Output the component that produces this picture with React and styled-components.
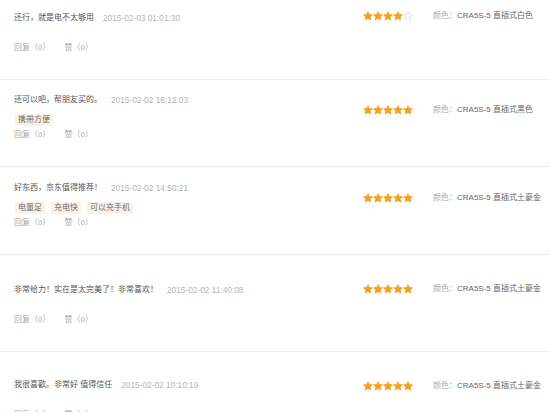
import React from 'react';
import styled, { createGlobalStyle } from 'styled-components';

const GlobalStyle = createGlobalStyle`
    html, body {
        margin: 0;
        padding: 0;
        background: #fff;
    }

    body {
        font-family: "Liberation Sans", "Noto Sans CJK SC", sans-serif;
        font-size: 8px;
        color: #666;
    }
`;

const List = styled.div`
    width: 550px;
`;

const Item = styled.div`
    display: grid;
    grid-template-columns: 349px 1fr;
    padding-left: 14px;
    border-bottom: 1px solid #ececec;
`;

const Main = styled.div`
    padding-top: ${(p) => p.$top + 1}px;
    padding-bottom: 23px;
`;

const Line = styled.div`
    display: flex;
    align-items: center;
    height: 16px;
    line-height: 16px;
    white-space: nowrap;
`;

const Content = styled.span`
    color: #555;
`;

const Time = styled.span`
    margin-left: 9px;
    font-size: 8.3px;
    color: #b4b4b4;
`;

const Tags = styled.div`
    display: flex;
    gap: 6px;
    min-height: 14px;
    box-sizing: border-box;
    padding: ${(p) => (p.$empty ? '0' : '6px 0 1px 1px')};
`;

const Tag = styled.span`
    display: inline-block;
    height: 12px;
    line-height: 12px;
    padding: 0 3px;
    background: #fcf1e6;
    color: #6a6a6a;
`;

const Actions = styled(Line)`
    gap: 14px;
    color: #aaa;
`;

const Side = styled.div`
    padding-top: ${(p) => p.$top}px;
`;

const Meta = styled(Line)`
    gap: 20px;
`;

const Stars = styled.span`
    display: flex;
    width: 50px;
`;

const Spec = styled.span`
    color: #666;

    em {
        font-style: normal;
        color: #aaa;
    }
`;

const Star = ({ on }) => (
    <svg width="10" height="10" viewBox="0 0 24 24">
        <path
            d="M12 1.5l3.2 6.9 7.5.8-5.6 5.1 1.6 7.4L12 17.9l-6.7 3.8 1.6-7.4-5.6-5.1 7.5-.8z"
            fill={on ? '#f7a11a' : '#fff'}
            stroke={on ? '#f0960c' : '#d6d6d6'}
            strokeWidth="1.5"
        />
    </svg>
);

const reviews = [
    { top: 9, side: 8, text: '还行，就是电不太够用', time: '2015-02-03 01:01:30', tags: [], score: 4, color: '直插式白色' },
    { top: 11, side: 22, text: '还可以吧，帮朋友买的。', time: '2015-02-02 16:12:03', tags: ['携带方便'], score: 5, color: '直插式黑色' },
    { top: 12, side: 23, text: '好东西，京东值得推荐！', time: '2015-02-02 14:50:21', tags: ['电量足', '充电快', '可以充手机'], score: 5, color: '直插式土豪金' },
    { top: 26, side: 26, text: '非常给力！实在是太完美了！非常喜欢！', time: '2015-02-02 11:40:08', tags: [], score: 5, color: '直插式土豪金' },
    { top: 24, side: 26, text: '我很喜歡。非常好 值得信任', time: '2015-02-02 10:10:19', tags: [], score: 5, color: '直插式土豪金' },
];

const App = () => {
    return (
        <>
            <GlobalStyle />
            <List>
                {reviews.map((r, i) => (
                    <Item key={i}>
                        <Main $top={r.top}>
                            <Line>
                                <Content>{r.text}</Content>
                                <Time>{r.time}</Time>
                            </Line>
                            <Tags $empty={r.tags.length === 0}>
                                {r.tags.map((t) => (
                                    <Tag key={t}>{t}</Tag>
                                ))}
                            </Tags>
                            <Actions>
                                <span>回复（0）</span>
                                <span>赞（0）</span>
                            </Actions>
                        </Main>
                        <Side $top={r.side}>
                            <Meta>
                                <Stars>
                                    {[0, 1, 2, 3, 4].map((n) => (
                                        <Star key={n} on={n < r.score} />
                                    ))}
                                </Stars>
                                <Spec>
                                    <em>颜色：</em>CRA5S-5 {r.color}
                                </Spec>
                            </Meta>
                        </Side>
                    </Item>
                ))}
            </List>
        </>
    );
};

export default App;
